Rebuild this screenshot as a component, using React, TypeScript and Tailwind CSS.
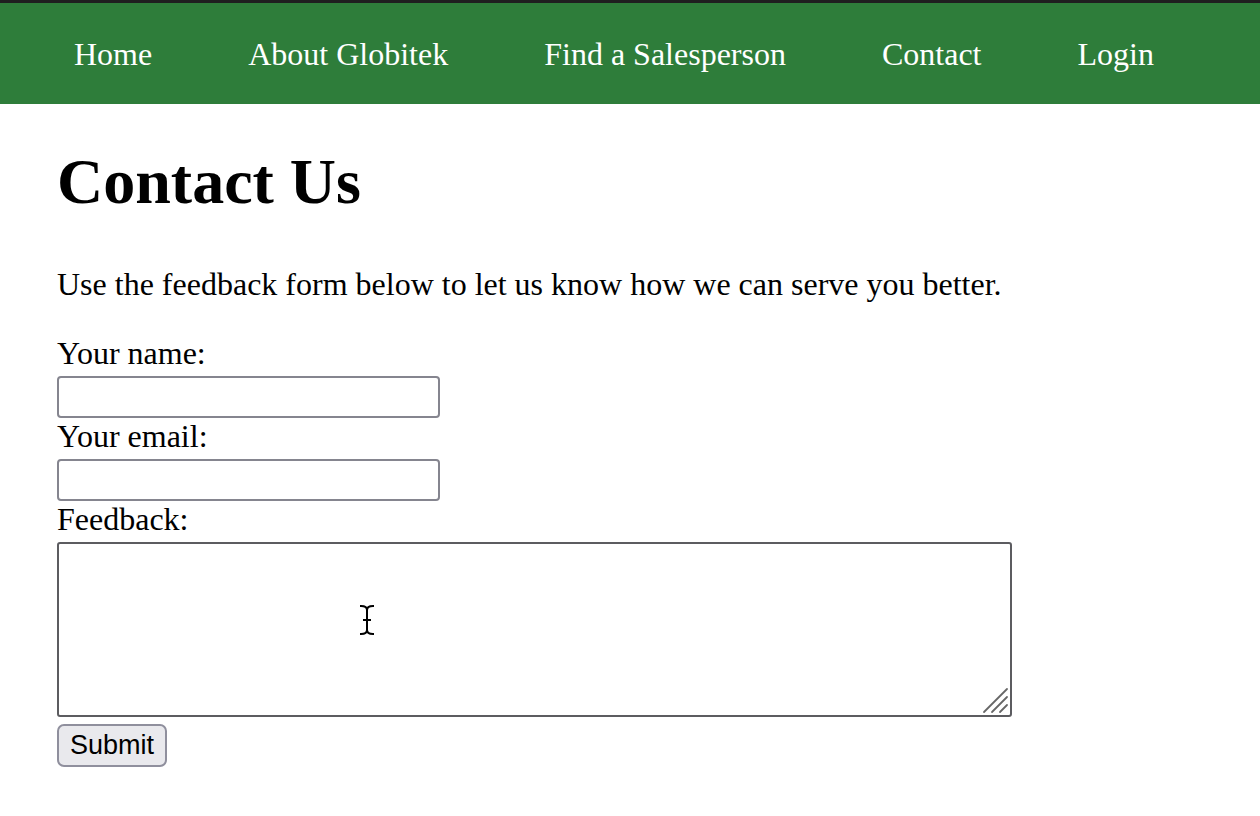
const navItems = ["Home", "About Globitek", "Find a Salesperson", "Contact", "Login"];

function ResizeGrip() {
  return (
    <svg
      className="pointer-events-none absolute bottom-[3px] right-[3px]"
      width="28"
      height="28"
      viewBox="0 0 28 28"
    >
      <g stroke="#666" strokeWidth="1.8" strokeLinecap="round">
        <line x1="3" y1="26" x2="26" y2="3" />
        <line x1="11" y1="26" x2="26" y2="11" />
        <line x1="19" y1="26" x2="26" y2="19" />
      </g>
    </svg>
  );
}

function TextCursor() {
  return (
    <svg
      className="pointer-events-none absolute left-[302px] top-[62px]"
      width="16"
      height="32"
      viewBox="0 0 16 32"
    >
      <g stroke="#000" strokeWidth="2" fill="none" strokeLinecap="square">
        <path d="M2 2 Q8 2 8 6 Q8 2 14 2" />
        <line x1="8" y1="6" x2="8" y2="26" />
        <line x1="5" y1="16" x2="11" y2="16" />
        <path d="M2 30 Q8 30 8 26 Q8 30 14 30" />
      </g>
    </svg>
  );
}

export default function App() {
  return (
    <div className="min-h-[816px] bg-white font-['Liberation_Serif','Times_New_Roman',serif] text-black">
      <div className="h-[3px] bg-[#1f1f1f]" />
      <nav className="flex h-[101px] items-center gap-[96px] bg-[#2e7d3a] pl-[74px] text-[32px] text-white">
        {navItems.map((item) => (
          <a key={item} href="#" className="leading-[36px]">
            {item}
          </a>
        ))}
      </nav>

      <main className="px-[57px]">
        <h1 className="mt-[42px] text-[64px] font-bold leading-[71px]">Contact Us</h1>
        <p className="mt-[49px] text-[32px] leading-[36px]">
          Use the feedback form below to let us know how we can serve you better.
        </p>

        <form className="mt-[33px] flex flex-col items-start text-[32px] leading-[36px]">
          <label htmlFor="name">Your name:</label>
          <input
            id="name"
            type="text"
            className="mt-[5px] h-[42px] w-[383px] rounded-[4px] border-2 border-[#85858f] bg-white"
          />
          <label htmlFor="email">Your email:</label>
          <input
            id="email"
            type="email"
            className="mt-[5px] h-[42px] w-[383px] rounded-[4px] border-2 border-[#85858f] bg-white"
          />
          <label htmlFor="feedback">Feedback:</label>
          <div className="relative mt-[5px]">
            <textarea
              id="feedback"
              className="block h-[175px] w-[955px] resize-none rounded-[3px] border-2 border-[#5c5c60] bg-white"
            />
            <ResizeGrip />
            <TextCursor />
          </div>
          <button
            type="submit"
            className="mt-[7px] h-[43px] rounded-[7px] border-2 border-[#8f8f9d] bg-[#e9e9ed] px-[11px] font-['Liberation_Sans',Arial,sans-serif] text-[27px] leading-none"
          >
            Submit
          </button>
        </form>
      </main>
    </div>
  );
}
